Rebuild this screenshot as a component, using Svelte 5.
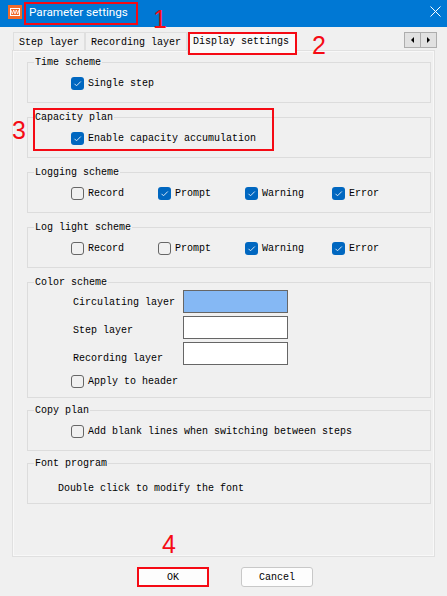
<script lang="ts">
	const logging = [
		{ label: 'Record', on: false },
		{ label: 'Prompt', on: true },
		{ label: 'Warning', on: true },
		{ label: 'Error', on: true }
	];
	const logLight = [
		{ label: 'Record', on: false },
		{ label: 'Prompt', on: false },
		{ label: 'Warning', on: true },
		{ label: 'Error', on: true }
	];
	const colors = [
		{ label: 'Circulating layer', color: '#85b8f4', shift: 2 },
		{ label: 'Step layer', color: '#fff', shift: 6 },
		{ label: 'Recording layer', color: '#fff', shift: 10 }
	];
</script>

{#snippet check(label: string, on: boolean)}
	<span class="check">
		<span class="box" class:on>
			{#if on}
				<svg width="13" height="13" viewBox="0 0 13 13"><path d="M3.500 6.800 5.500 8.800 9.800 4.500" fill="none" stroke="#d5e6f7" stroke-width="1" /></svg>
			{/if}
		</span>
		{label}
	</span>
{/snippet}

<div class="dialog">
	<header class="titlebar">
		<svg class="logo" width="14" height="14" viewBox="0 0 14 14">
			<rect width="14" height="14" fill="#f26a2a" />
			<rect x="2.500" y="3.500" width="9" height="7" fill="none" stroke="#fff" />
			<path d="M3 5 4.300 9 5.700 5 7 9 8.300 5 9.700 9 11 5" fill="none" stroke="#fff" stroke-width=".8" />
		</svg>
		<span class="title">Parameter settings</span>
		<svg class="close" width="11" height="11" viewBox="0 0 11 11"><path d="M.5.5 10.500 10.500M10.500.5.5 10.500" stroke="#fff" fill="none" /></svg>
	</header>

	<div class="tabs">
		<button class="tab">Step layer</button>
		<button class="tab">Recording layer</button>
		<button class="tab active">Display settings</button>
		<div class="scroller">
			<button aria-label="Previous"><span class="arrow left"></span></button>
			<button aria-label="Next"><span class="arrow right"></span></button>
		</div>
	</div>

	<div class="panel">
		<fieldset class="wide-gap">
			<legend>Time scheme</legend>
			<div class="row">{@render check('Single step', true)}</div>
		</fieldset>
		<fieldset class="wide-gap">
			<legend>Capacity plan</legend>
			<div class="row">{@render check('Enable capacity accumulation', true)}</div>
		</fieldset>
		<fieldset class="wide-gap">
			<legend>Logging scheme</legend>
			<div class="row four">
				{#each logging as item}
					{@render check(item.label, item.on)}
				{/each}
			</div>
		</fieldset>
		<fieldset class="wide-gap">
			<legend>Log light scheme</legend>
			<div class="row four">
				{#each logLight as item}
					{@render check(item.label, item.on)}
				{/each}
			</div>
		</fieldset>
		<fieldset class="colors">
			<legend>Color scheme</legend>
			{#each colors as item}
				<div class="color-row">
					<span class="color-label" style="padding-top: {item.shift}px">{item.label}</span>
					<span class="swatch" style="background: {item.color}"></span>
				</div>
			{/each}
			<div class="row apply">{@render check('Apply to header', false)}</div>
		</fieldset>
		<fieldset>
			<legend>Copy plan</legend>
			<div class="row">{@render check('Add blank lines when switching between steps', false)}</div>
		</fieldset>
		<fieldset>
			<legend>Font program</legend>
			<div class="font-hint">Double click to modify the font</div>
		</fieldset>
	</div>

	<footer class="actions">
		<button class="btn">OK</button>
		<button class="btn">Cancel</button>
	</footer>

	<!-- red annotations drawn over the screenshot -->
	<div class="mark" style="left: 24px; top: 2px; width: 114px; height: 23px"></div>
	<div class="mark" style="left: 188px; top: 32px; width: 109px; height: 23px"></div>
	<div class="mark" style="left: 33px; top: 108px; width: 241px; height: 43px"></div>
	<div class="mark" style="left: 137px; top: 567px; width: 72px; height: 20px"></div>
	<span class="num" style="left: 153px; top: 5px">1</span>
	<span class="num" style="left: 312px; top: 31px">2</span>
	<span class="num" style="left: 12px; top: 116px">3</span>
	<span class="num" style="left: 162px; top: 530px">4</span>
</div>

<style>
	:global(body) {
		background: #f0f0f0;
	}

	.dialog {
		position: relative;
		width: 447px;
		height: 596px;
		overflow: hidden;
		background: #f0f0f0;
		font-family: 'Liberation Mono', monospace;
		font-size: 10px;
		color: #000;
	}

	.titlebar {
		box-sizing: border-box;
		height: 27px;
		display: flex;
		align-items: center;
		gap: 7px;
		padding: 0 6px 4px 8px;
		background: #0078d4;
		color: #fff;
	}

	.logo {
		flex: none;
	}

	.title {
		flex: 1;
		font-family: Roboto, sans-serif;
		font-size: 11.7px;
	}

	.tabs {
		display: flex;
		align-items: flex-end;
		height: 23px;
		padding-left: 13px;
	}

	.tab {
		box-sizing: border-box;
		height: 18px;
		padding: 1px 5px 0;
		border: 1px solid #dfdfdf;
		border-bottom: none;
		background: #f0f0f0;
		font: inherit;
		color: inherit;
	}

	.tab.active {
		position: relative;
		height: 22px;
		margin: 0 0 -4px;
		padding: 0 7px 4px 5px;
		background: #fafafa;
	}

	.scroller {
		align-self: flex-start;
		margin: 5px 10px 0 auto;
		display: flex;
	}

	.scroller button {
		box-sizing: border-box;
		width: 17px;
		height: 16px;
		padding: 0;
		display: flex;
		align-items: center;
		justify-content: center;
		border: 1px solid #adadad;
		background: #e1e1e1;
	}

	.scroller button + button {
		margin-left: -1px;
	}

	.arrow {
		width: 0;
		height: 0;
		border-top: 3.5px solid transparent;
		border-bottom: 3.5px solid transparent;
	}

	.arrow.left {
		border-right: 3.5px solid #000;
	}

	.arrow.right {
		border-left: 3.5px solid #000;
	}

	.panel {
		box-sizing: border-box;
		height: 507px;
		margin: 0 12px;
		padding: 5px 3px 0 14px;
		border: 1px solid #e0e0e0;
		box-shadow: inset 0 0 0 1px #f8f8f8;
	}

	fieldset {
		box-sizing: border-box;
		height: 47px;
		margin: 0 0 6px;
		padding: 0 0 0 43px;
		border: 1px solid #dcdcdc;
		min-width: 0;
	}

	.wide-gap {
		margin-bottom: 8px;
	}

	legend {
		margin-left: -37px;
		padding: 0 1px;
		line-height: 13px;
	}

	.colors {
		height: 122px;
	}

	.row {
		display: flex;
		height: 21px;
		align-items: center;
		margin-top: 4px;
	}

	.four .check {
		width: 87px;
	}

	.check {
		display: inline-flex;
		align-items: center;
		gap: 4px;
		white-space: nowrap;
	}

	.box {
		box-sizing: border-box;
		width: 13px;
		height: 13px;
		border: 1px solid #666;
		border-radius: 3px;
	}

	.box.on {
		border: none;
		background: #0067c0;
	}

	.box svg {
		display: block;
	}

	.color-row {
		display: flex;
		align-items: center;
		height: 23px;
		margin-top: 3px;
	}

	.color-row:first-of-type {
		margin-top: 1px;
	}

	.color-label {
		width: 110px;
		margin-left: 2px;
	}

	.swatch {
		box-sizing: border-box;
		width: 105px;
		height: 23px;
		border: 1px solid #666;
	}

	.apply {
		margin-top: 6px;
	}

	.font-hint {
		margin: 9px 0 0 -13px;
		line-height: 20px;
	}

	.actions {
		display: flex;
		justify-content: center;
		gap: 32px;
		padding: 10px 0 0 3px;
	}

	.btn {
		box-sizing: border-box;
		width: 72px;
		height: 20px;
		padding: 0;
		border: 1px solid #c8c8c8;
		border-radius: 3px;
		background: #fdfdfd;
		font: inherit;
		color: inherit;
	}

	.mark {
		position: absolute;
		box-sizing: border-box;
		border: 2px solid #f50a14;
		pointer-events: none;
	}

	.num {
		position: absolute;
		font-family: 'Liberation Sans', sans-serif;
		font-size: 25px;
		line-height: 28px;
		color: #f50a14;
	}
</style>
